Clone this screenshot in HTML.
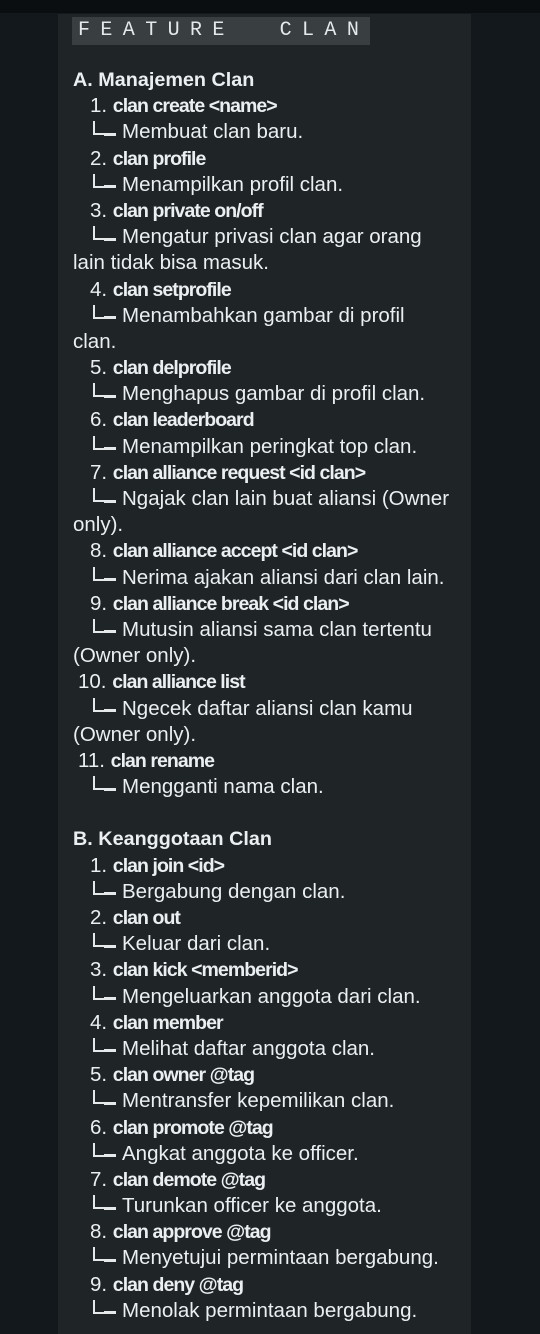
<!DOCTYPE html>
<html><head><meta charset="utf-8"><style>
html,body{margin:0;padding:0}
body{width:540px;height:1324px;overflow:hidden;background:#12181b;font-family:"Liberation Sans",Arial,sans-serif;color:#eceff0;position:relative}
.top{position:absolute;left:0;top:0;width:540px;height:13px;background:#0a0e11}
.bub{position:absolute;left:58px;top:14px;width:413px;height:1320px;background:#1f2427}
.hdr{position:absolute;left:72px;top:17px;width:298px;height:28px;background:#393e41;font-family:"Liberation Mono",monospace;font-size:20px;letter-spacing:10.4px;line-height:28px;padding-left:6px;box-sizing:border-box;color:#e6e9ea;white-space:pre}
.txt{position:absolute;left:73px;top:67px;font-size:20.5px;line-height:26.2px;white-space:nowrap}
.txt div{height:26.2px}
.i{padding-left:17px}.i2{padding-left:5px}
.a{padding-left:20px}
b{font-weight:bold;font-size:19.5px;letter-spacing:-0.95px}
b.h{font-size:19.8px;letter-spacing:0}
.c{display:inline-block;width:9px;height:12px;border-left:2px solid #e6e9ea;border-bottom:2px solid #e6e9ea;vertical-align:3px;position:relative;margin-right:18px}
.c:after{content:"";position:absolute;left:9px;bottom:-2.5px;width:12px;height:3px;background:#e6e9ea}
</style></head><body>
<div class="top"></div>
<div class="bub"></div>
<div class="hdr">FEATURE  CLAN</div>
<div class="txt">
<div><b class="h">A. Manajemen Clan</b></div>
<div class="i">1. <b>clan create &lt;name&gt;</b></div>
<div class="a"><span class="c"></span>Membuat clan baru.</div>
<div class="i">2. <b>clan profile</b></div>
<div class="a"><span class="c"></span>Menampilkan profil clan.</div>
<div class="i">3. <b>clan private on/off</b></div>
<div class="a"><span class="c"></span>Mengatur privasi clan agar orang</div>
<div>lain tidak bisa masuk.</div>
<div class="i">4. <b>clan setprofile</b></div>
<div class="a"><span class="c"></span>Menambahkan gambar di profil</div>
<div>clan.</div>
<div class="i">5. <b>clan delprofile</b></div>
<div class="a"><span class="c"></span>Menghapus gambar di profil clan.</div>
<div class="i">6. <b>clan leaderboard</b></div>
<div class="a"><span class="c"></span>Menampilkan peringkat top clan.</div>
<div class="i">7. <b>clan alliance request &lt;id clan&gt;</b></div>
<div class="a"><span class="c"></span>Ngajak clan lain buat aliansi (Owner</div>
<div>only).</div>
<div class="i">8. <b>clan alliance accept &lt;id clan&gt;</b></div>
<div class="a"><span class="c"></span>Nerima ajakan aliansi dari clan lain.</div>
<div class="i">9. <b>clan alliance break &lt;id clan&gt;</b></div>
<div class="a"><span class="c"></span>Mutusin aliansi sama clan tertentu</div>
<div>(Owner only).</div>
<div class="i2">10. <b>clan alliance list</b></div>
<div class="a"><span class="c"></span>Ngecek daftar aliansi clan kamu</div>
<div>(Owner only).</div>
<div class="i2">11. <b>clan rename</b></div>
<div class="a"><span class="c"></span>Mengganti nama clan.</div>
<div></div>
<div><b class="h">B. Keanggotaan Clan</b></div>
<div class="i">1. <b>clan join &lt;id&gt;</b></div>
<div class="a"><span class="c"></span>Bergabung dengan clan.</div>
<div class="i">2. <b>clan out</b></div>
<div class="a"><span class="c"></span>Keluar dari clan.</div>
<div class="i">3. <b>clan kick &lt;memberid&gt;</b></div>
<div class="a"><span class="c"></span>Mengeluarkan anggota dari clan.</div>
<div class="i">4. <b>clan member</b></div>
<div class="a"><span class="c"></span>Melihat daftar anggota clan.</div>
<div class="i">5. <b>clan owner @tag</b></div>
<div class="a"><span class="c"></span>Mentransfer kepemilikan clan.</div>
<div class="i">6. <b>clan promote @tag</b></div>
<div class="a"><span class="c"></span>Angkat anggota ke officer.</div>
<div class="i">7. <b>clan demote @tag</b></div>
<div class="a"><span class="c"></span>Turunkan officer ke anggota.</div>
<div class="i">8. <b>clan approve @tag</b></div>
<div class="a"><span class="c"></span>Menyetujui permintaan bergabung.</div>
<div class="i">9. <b>clan deny @tag</b></div>
<div class="a"><span class="c"></span>Menolak permintaan bergabung.</div>
</div>
</body></html>
